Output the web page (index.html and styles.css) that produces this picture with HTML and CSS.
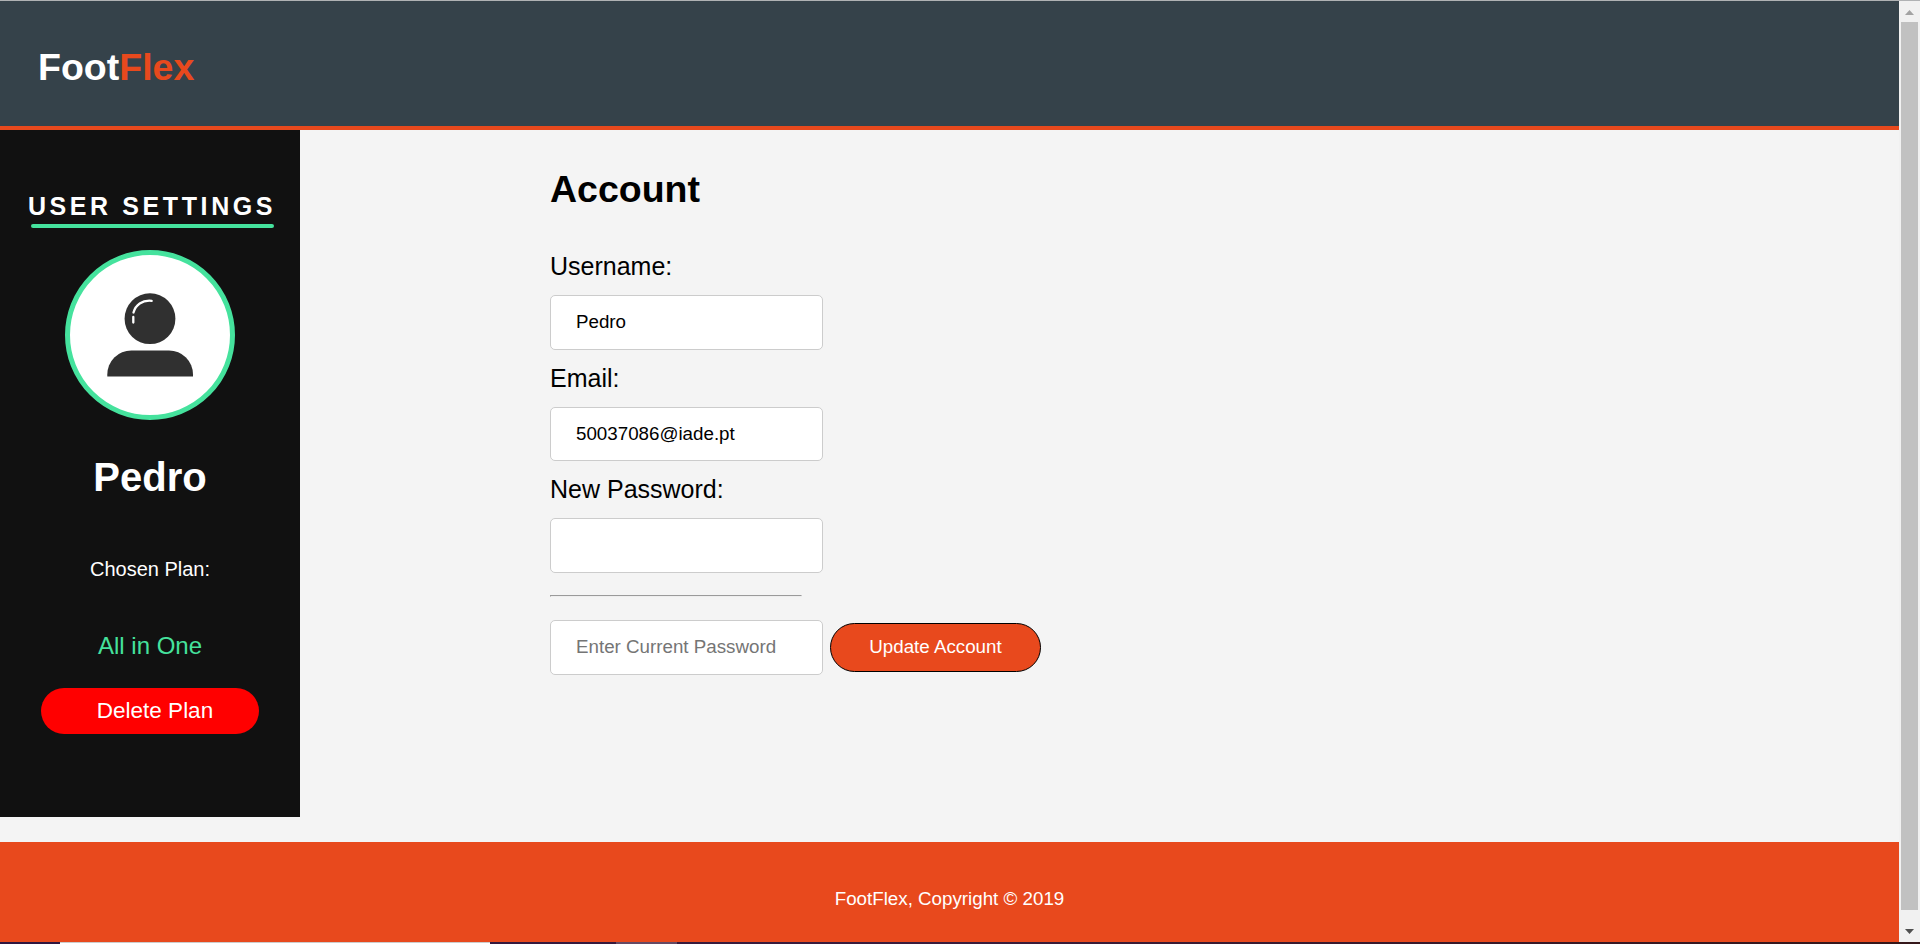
FILE: index.html
```html
<!DOCTYPE html>
<html lang="en">
<head>
<meta charset="utf-8">
<title>FootFlex</title>
<link rel="stylesheet" href="styles.css">
</head>
<body>
<div class="window">
  <div class="page">
    <header class="header"><div class="logo">Foot<span class="accent">Flex</span></div></header>
    <div class="content">
      <aside class="sidebar">
        <h2 class="side-title">USER SETTINGS</h2>
        <div class="side-line"></div>
        <div class="avatar">
          <svg width="160" height="160" viewBox="0 0 160 160">
            <circle cx="80" cy="63.700" r="25.400" fill="#303030"/>
            <path d="M37.300 121.500v-2a24 24 0 0 1 24-24h37.700a24 24 0 0 1 24 24v2z" fill="#303030"/>
            <path d="M63.500 57.500C65.500 50 72 44.800 81.700 45.800M63.300 62v5.500" fill="none" stroke="#fff" stroke-width="2.300" stroke-linecap="round"/>
          </svg>
        </div>
        <h1 class="user-name">Pedro</h1>
        <p class="plan-label">Chosen Plan:</p>
        <p class="plan-name">All in One</p>
        <button class="delete">Delete Plan</button>
      </aside>
      <main class="account">
        <h1 class="title">Account</h1>
        <label class="label" for="username">Username:</label>
        <input class="field" id="username" type="text" value="Pedro">
        <label class="label" for="email">Email:</label>
        <input class="field email" id="email" type="text" value="50037086@iade.pt">
        <label class="label" for="password">New Password:</label>
        <input class="field" id="password" type="password">
        <hr class="rule">
        <div class="submit-row">
          <input class="field" type="password" placeholder="Enter Current Password">
          <button class="update">Update Account</button>
        </div>
      </main>
    </div>
    <footer class="footer">FootFlex, Copyright © 2019</footer>
  </div>
  <div class="scrollbar">
    <svg class="arrow" width="21" height="21" viewBox="0 0 21 21"><path d="M6 14l4.500-5 4.500 5z" fill="#a3a3a3"/></svg>
    <div class="thumb"></div>
    <svg class="arrow" width="21" height="21" viewBox="0 0 21 21"><path d="M6 9l4.500 5 4.500-5z" fill="#505050"/></svg>
  </div>
</div>
<div class="taskbar"><div class="task-search"></div><div class="task-active"></div></div>
</body>
</html>
```
FILE: styles.css
```css
* { box-sizing: border-box; }
body {
  margin: 0;
  height: 944px;
  overflow: hidden;
  display: flex;
  flex-direction: column;
  background: #f4f4f4;
  font-family: "Liberation Sans", Arial, sans-serif;
  font-size: 18.75px;
}
h1, h2, p { margin: 0; }
.window { display: flex; height: 942px; border-top: 1px solid #b0b2b4; }
.page { flex: 1; display: flex; flex-direction: column; }
.header {
  height: 129px;
  padding: 41px 38px 0;
  background: #35424a;
  border-bottom: 4px solid #e8491d;
}
.logo { font-size: 37.5px; font-weight: bold; line-height: 50px; color: #fff; }
.accent { color: #e8491d; }
.content { display: flex; height: 712px; align-items: flex-start; }
.sidebar {
  width: 300px;
  height: 687px;
  padding-top: 61px;
  background: #111;
  color: #fff;
  display: flex;
  flex-direction: column;
  align-items: center;
}
.side-title { font-size: 25px; line-height: 30px; letter-spacing: 3.6px; white-space: nowrap; margin-left: 4px; }
.side-line { width: 243px; height: 4px; margin: 3px 0 22px 5px; border-radius: 2px; background: #45e29d; }
.avatar { width: 170px; height: 170px; border: 5px solid #45e29d; border-radius: 50%; background: #fff; }
.avatar svg { display: block; }
.user-name { margin-top: 32px; font-size: 40px; line-height: 50px; }
.plan-label { margin-top: 52px; font-size: 20px; line-height: 30px; }
.plan-name { margin-top: 47px; font-size: 24px; line-height: 30px; color: #45e29d; }
.delete {
  width: 218px;
  height: 46px;
  margin-top: 27px;
  padding: 0 0 0 10px;
  border: 0;
  border-radius: 23px;
  background: #f00;
  color: #fff;
  font: 22.5px "Liberation Sans", Arial, sans-serif;
}
.account { padding: 34px 0 0 250px; display: flex; flex-direction: column; align-items: flex-start; }
.title { margin-bottom: 37px; font-size: 37.5px; line-height: 50px; }
.label { margin-bottom: 14px; font-size: 25px; line-height: 30px; }
.field {
  width: 273px;
  height: 55px;
  margin: 0 0 13px;
  padding: 0 25px 2px;
  border: 1px solid #ccc;
  border-radius: 5px;
  background: #fff;
  color: #000;
  font: 18.75px "Liberation Sans", Arial, sans-serif;
}
.email { height: 54px; padding-bottom: 1px; }
.field::placeholder { color: #757575; }
.rule { width: 252px; height: 2px; margin: 9px 0 23px; border: 1px solid; border-color: #9a9a9a #eee #eee #9a9a9a; }
.submit-row { display: flex; gap: 7px; }
.update {
  width: 211px;
  height: 49px;
  margin-top: 3px;
  padding: 0 0 1px;
  border: 1px solid #000;
  border-radius: 25px;
  background: #e8491d;
  color: #fff;
  font: 18.75px "Liberation Sans", Arial, sans-serif;
}
.footer { height: 100px; padding-top: 42px; background: #e8491d; color: #fff; text-align: center; line-height: 30px; }
.scrollbar { width: 21px; display: flex; flex-direction: column; background: #f1f1f1; }
.arrow { display: block; height: 21px; }
.thumb { width: 17px; height: 888px; margin-left: 2px; margin-bottom: 10px; background: #c1c1c1; }
.taskbar { display: flex; height: 2px; background: linear-gradient(90deg, #2f1640, #3a1c3c 50%, #351719); }
.task-search { width: 430px; margin-left: 60px; background: #fff; border-top: 1px solid #ccc; }
.task-active { width: 61px; margin-left: 126px; background: #654a64; }
```
